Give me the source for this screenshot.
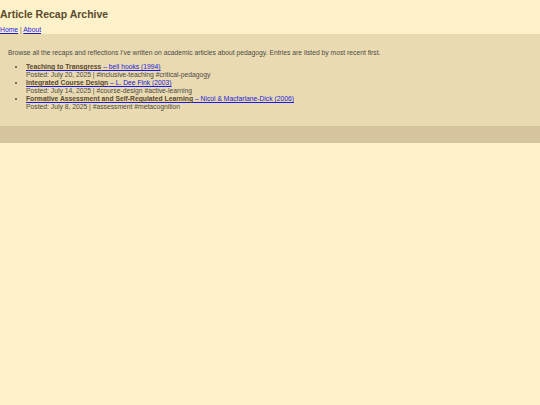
import React from "react";

const items = [
  { title: "Teaching to Transgress", by: " – bell hooks (1994)", meta: "Posted: July 20, 2025 | #inclusive-teaching #critical-pedagogy" },
  { title: "Integrated Course Design", by: " – L. Dee Fink (2003)", meta: "Posted: July 14, 2025 | #course-design #active-learning" },
  { title: "Formative Assessment and Self-Regulated Learning", by: " – Nicol & Macfarlane-Dick (2006)", meta: "Posted: July 8, 2025 | #assessment #metacognition" },
];

export default function App() {
  return (
    <div className="min-h-[405px] w-[540px] bg-[#fcf1c9] text-[#4d4b45]" style={{ fontFamily: '"Liberation Sans", Arial, sans-serif' }}>
      <header>
        <h1 className="pt-[7.7px] text-[10.5px] font-bold leading-[12px] text-[#5b4a2c]">Article Recap Archive</h1>
        <nav className="mt-[6px] text-[6.8px] leading-[8px]">
          <a href="#" className="text-[#1a1ae0] underline">Home</a>
          <span> | </span>
          <a href="#" className="text-[#1a1ae0] underline">About</a>
        </nav>
      </header>
      <main className="bg-[#e9dab1] px-[8px] pt-[15px] pb-[15px] text-[6.75px]">
        <p className="leading-[8px]">Browse all the recaps and reflections I’ve written on academic articles about pedagogy. Entries are listed by most recent first.</p>
        <ul className="mt-[6.5px] list-disc pl-[18px] leading-[7.6px]">
          {items.map((it) => (
            <li key={it.title} className="mb-[0.8px]">
              <a href="#" className="text-[#1a1ae0] underline">
                <strong className="font-bold text-[#5a4630]">{it.title}</strong>
                {it.by}
              </a>
              <br />
              <span>{it.meta}</span>
            </li>
          ))}
        </ul>
      </main>
      <footer className="h-[16.5px] bg-[#d5c49d]"></footer>
    </div>
  );
}
